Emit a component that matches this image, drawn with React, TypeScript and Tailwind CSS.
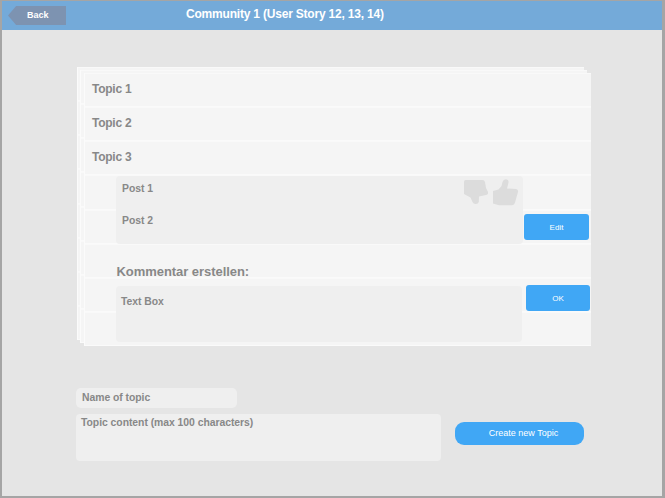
import type { ReactNode } from "react";

const ROWS = 8;

function Label({ children, className = "" }: { children: ReactNode; className?: string }) {
  return <div className={`whitespace-nowrap font-bold text-[#888888] ${className}`}>{children}</div>;
}

function Sheet({ className }: { className: string }) {
  return (
    <div className={`absolute grid h-[273px] w-[507px] grid-rows-8 border-l border-[#fbfbfb] bg-[#f5f5f5] ${className}`}>
      {Array.from({ length: ROWS }, (_, i) => (
        <div key={i} className="border-t border-b border-t-[#f9f9f9] border-b-[#fafafa]" />
      ))}
    </div>
  );
}

function Thumb({ down = false }: { down?: boolean }) {
  return (
    <svg width="26" height="27" viewBox="0 0 26 27" className="block" fill="#dcdcdc">
      {down ? (
        <path d="M1.500 1H18.500Q20.500 1 21 3L22 9L24 13Q24.500 15.500 22 16L15 17.500L14.800 23Q14 25.200 11.500 25Q9.500 25 8.500 23L6.500 18.500L0 15V3Q0 1 1.500 1Z" />
      ) : (
        <path d="M0 12L5.500 10.500L8.500 7L9.500 3Q10.500 0 13 .200Q16 .600 15.500 3.500L14 9.500L23 10Q25.500 10.500 25 13L22 23.500Q21.500 26 19 26.200H6L0 24.500Z" />
      )}
    </svg>
  );
}

export default function App() {
  return (
    <div className="h-[498px] w-[665px] overflow-hidden bg-[#a5a5a5] pl-[2px] pt-px font-['Liberation_Sans',Arial,sans-serif]">
      <main className="h-[495px] w-[660px] bg-[#e5e5e5]">
        <header className="flex h-[29px] bg-[#74aad9]">
          <button className="ml-[6px] mt-[5px] flex h-[19px] w-[58px] bg-[#7d93b1] pl-[19px] pt-[3px] text-[9px] font-bold leading-[12px] text-white [clip-path:polygon(0_50%,14%_0,100%_0,100%_100%,14%_100%)]">
            Back
          </button>
          <h1 className="ml-[120px] mt-[6px] whitespace-nowrap text-[12px] font-bold leading-[14px] tracking-[-0.2px] text-white">
            Community 1 (User Story 12, 13, 14)
          </h1>
        </header>

        <section className="relative ml-[75px] mt-[37px] h-[279px] w-[514px]">
          <Sheet className="left-0 top-0" />
          <Sheet className="left-[3px] top-[3px]" />
          <Sheet className="left-[7px] top-[6px]" />
          <div className="relative pl-[15px] pt-[6px]">
            <Label className="h-[34px] pt-[9px] text-[12px] leading-[14px] tracking-[-0.25px]">Topic 1</Label>
            <Label className="h-[34px] pt-[9px] text-[12px] leading-[14px] tracking-[-0.25px]">Topic 2</Label>
            <Label className="h-[35px] pt-[9px] text-[12px] leading-[14px] tracking-[-0.25px]">Topic 3</Label>
          </div>
          <div className="relative flex pl-[39px]">
            <div className="flex h-[68px] w-[407px] justify-between rounded-[4px] bg-[#efefef] pl-[6px]">
              <div>
                <Label className="h-[32px] pt-[7px] text-[10.4px] leading-[12px] tracking-[-0.04px]">Post 1</Label>
                <Label className="pt-[7px] text-[10.4px] leading-[12px] tracking-[-0.04px]">Post 2</Label>
              </div>
              <div className="flex gap-[3px] pr-[4px] pt-[3px]">
                <Thumb down />
                <Thumb />
              </div>
            </div>
            <button className="ml-px mt-[38px] h-[26px] w-[65px] rounded-[3px] bg-[#40a7f5] pt-px text-[8px] text-white">Edit</button>
          </div>
          <Label className="relative ml-[39.5px] mt-[20px] text-[13px] leading-[15px] tracking-[-0.05px]">Kommentar erstellen:</Label>
          <div className="relative mt-[6px] flex pl-[39px]">
            <div className="mt-px h-[56px] w-[406px] rounded-[4px] bg-[#efefef] pl-[5px] pt-[10px]">
              <Label className="text-[10.4px] leading-[12px] tracking-[-0.04px]">Text Box</Label>
            </div>
            <button className="ml-[4px] h-[26px] w-[64px] rounded-[3px] bg-[#40a7f5] pt-px text-[8px] text-white">OK</button>
          </div>
        </section>

        <form className="ml-[74px] mt-[42px]">
          <div className="h-[20px] w-[161px] rounded-[5px] bg-[#efefef] pl-[6px] pt-[4px]">
            <Label className="text-[10.4px] leading-[12px] tracking-[-0.04px]">Name of topic</Label>
          </div>
          <div className="mt-[6px] flex">
            <div className="h-[47px] w-[365px] rounded-[4px] bg-[#efefef] pl-[5px] pt-[3px]">
              <Label className="text-[10.4px] leading-[12px] tracking-[-0.04px]">Topic content (max 100 characters)</Label>
            </div>
            <button type="button" className="ml-[14px] mt-[8px] h-[23px] w-[129px] rounded-[9px] bg-[#40a7f5] pl-[8px] pt-px text-[9px] text-white">
              Create new Topic
            </button>
          </div>
        </form>
      </main>
    </div>
  );
}
